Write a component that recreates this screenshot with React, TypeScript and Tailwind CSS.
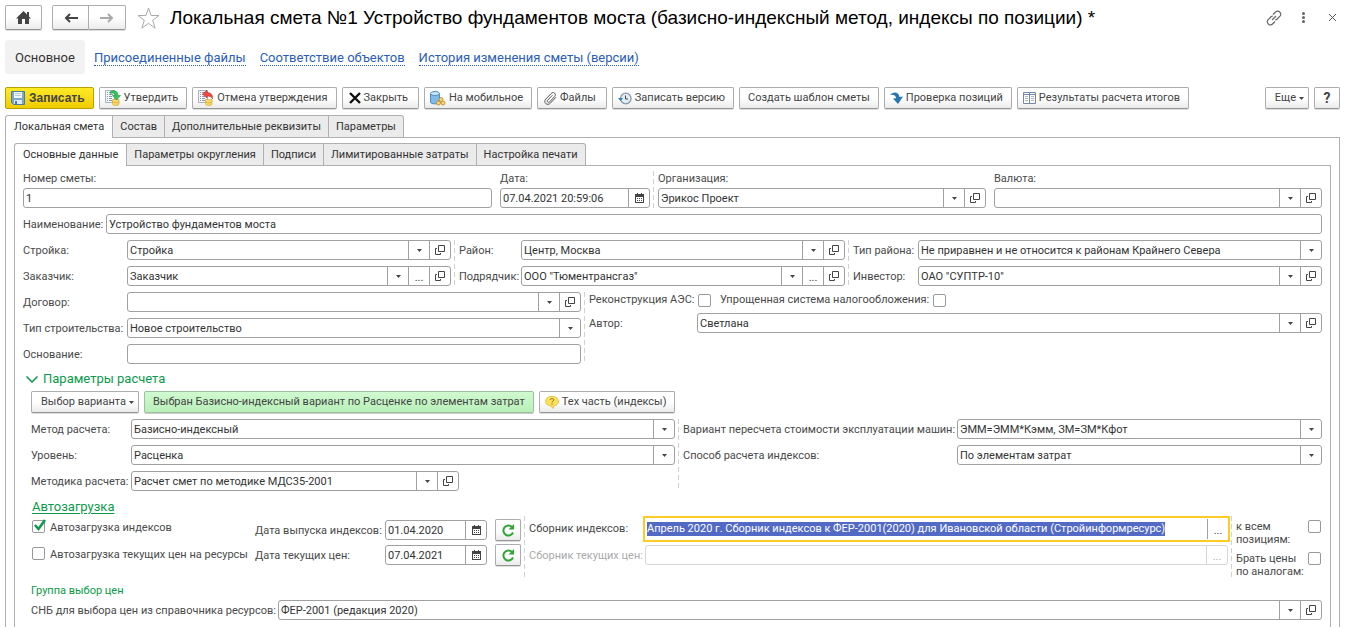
import { useEffect, useRef } from "react";
import type { ReactNode } from "react";

/* ---------- icons ---------- */

const Caret = () => (
  <svg width="5" height="3" viewBox="0 0 5 3" className="shrink-0 fill-[#444]">
    <path d="M0 0h5L2.5 3z" />
  </svg>
);

const OpenIcon = () => (
  <svg width="10" height="10" viewBox="0 0 10 10" fill="none" stroke="#444">
    <path d="M3.500.5h6v6h-6zM2 3.500H.5v6h5V8" />
  </svg>
);

const CalendarIcon = () => (
  <svg width="9" height="10" viewBox="0 0 9 10" fill="#444">
    <path d="M2 0h1v1h3V0h1v1h2v9H0V1h2zM1 4v5h7V4z" fillRule="evenodd" />
    <path d="M2 5h1v1H2zM4 5h1v1H4zM6 5h1v1H6zM2 7h1v1H2zM4 7h1v1H4zM6 7h1v1H6z" />
  </svg>
);

const HomeIcon = () => (
  <svg width="15" height="13" viewBox="0 0 15 13" fill="#444">
    <path d="M7.500 0 11 3.500V1h2v4.500L15 7.500h-2V13H9V8H6v5H2V7.500H0z" />
  </svg>
);

const ArrowIcon = ({ back }: { back?: boolean }) => (
  <svg
    width="14"
    height="10"
    viewBox="0 0 14 10"
    fill="none"
    strokeWidth="2"
    className={back ? "stroke-[#444]" : "stroke-[#aaa]"}
  >
    {back ? <path d="M14 5H2M6 1 2 5l4 4" /> : <path d="M0 5h12M8 1l4 4-4 4" />}
  </svg>
);

const StarIcon = () => (
  <svg width="23" height="22" viewBox="0 0 23 22" fill="none" stroke="#aaa">
    <path d="m11.500 1 2.600 7.500H22l-6.300 4.800 2.400 7.900-6.600-4.900-6.600 4.900 2.400-7.900L1 8.500h7.900z" />
  </svg>
);

const LinkIcon = () => (
  <svg width="16" height="16" viewBox="0 0 16 16" fill="none" stroke="#666" strokeWidth="1.200">
    <path d="M7 4.500 9.500 2a2.800 2.800 0 0 1 4.300.2 2.800 2.800 0 0 1 .2 4L11.200 9a2.800 2.800 0 0 1-2 .8" />
    <path d="M9 11.500 6.500 14a2.800 2.800 0 0 1-4.300-.2 2.800 2.800 0 0 1-.2-4L4.800 7a2.800 2.800 0 0 1 2-.8" />
    <path d="m6 10 4-4" />
  </svg>
);

const DotsIcon = () => (
  <svg width="3" height="11" viewBox="0 0 3 11" fill="#666">
    <circle cx="1.500" cy="1.500" r="1.500" />
    <circle cx="1.500" cy="5.500" r="1.500" />
    <circle cx="1.500" cy="9.500" r="1.500" />
  </svg>
);

const CloseIcon = () => (
  <svg width="7" height="7" viewBox="0 0 7 7" stroke="#555">
    <path d="m0 0 7 7M7 0 0 7" />
  </svg>
);

const SaveIcon = () => (
  <svg width="14" height="14" viewBox="0 0 14 14">
    <path d="M.5.5h13v13h-11l-2-2z" fill="#7ba6cb" stroke="#4a7ba6" />
    <path d="M3 1h8v6H3z" fill="#f2f6fa" />
    <path d="M4 2.500h6M4 4.500h6" stroke="#b9cad9" />
    <path d="M3 9h8v4H3z" fill="#dfe9f1" />
    <path d="M4 10h2v3H4z" fill="#4a7ba6" />
  </svg>
);

const DocIcon = ({ cancel }: { cancel?: boolean }) => (
  <svg width="16" height="16" viewBox="0 0 16 16">
    <path d="M.5.5h9v12h-9z" fill="#f4f7fa" stroke="#a6b2bf" />
    <path d="M2 2.500h1M4 2.500h4M2 4.500h1M4 4.500h4M2 6.500h1M4 6.500h3M2 8.500h1M4 8.500h3M2 10.500h1M4 10.500h3" stroke="#8a9cae" />
    <path d="M7.500 9.500v4.500c0 2 6.500 2 6.500 0V9.500z" fill="#f8d862" stroke="#cfa22b" strokeWidth=".6" />
    <path d="M7.500 11.500c0 1.500 6.500 1.500 6.500 0" fill="none" stroke="#cfa22b" strokeWidth=".6" />
    {cancel ? (
      <path d="M4.500 4 9 .3v2.200c3.500 0 6 2 5.500 6.500-.8-2-2.500-3-5.500-3V8z" fill="#f04a40" stroke="#b82218" strokeWidth=".5" />
    ) : (
      <path d="M5.500 1.500C10-.5 13 1.500 13 5.500h2.500L11.500 10 7.500 5.500H10c0-2-1.500-3-4.500-2z" fill="#35c455" stroke="#178a34" strokeWidth=".5" />
    )}
  </svg>
);

const CrossIcon = () => (
  <svg width="12" height="12" viewBox="0 0 12 12" stroke="#111" strokeWidth="2.400">
    <path d="m1 1 10 10M11 1 1 11" />
  </svg>
);

const DatabaseIcon = () => (
  <svg width="16" height="15" viewBox="0 0 16 15">
    <path d="M.5 2.500v8.500c0 2.500 9 2.500 9 0V2.500z" fill="#7fbaea" stroke="#4a8cc2" />
    <ellipse cx="5" cy="2.500" rx="4.500" ry="2" fill="#cde6f8" stroke="#4a8cc2" />
    <g fill="#fbd475" stroke="#bd8520" strokeWidth=".8">
      <circle cx="11" cy="8.500" r="2" />
      <circle cx="8.500" cy="12" r="2" />
      <circle cx="13" cy="12" r="2" />
    </g>
  </svg>
);

const ClipIcon = () => (
  <svg width="13" height="13" viewBox="0 0 13 13" fill="none" stroke="#555">
    <path d="m12 5.200-5.600 5.900c-1.200 1.300-3.200 1.700-4.600.5s-1.300-3.200-.1-4.500L7.200 1.500c.9-1 2.400-1.200 3.400-.3s1 2.400.1 3.300L5.700 9.800c-.6.600-1.400.7-2 .2s-.5-1.400.1-2L8.400 3.200" />
  </svg>
);

const HistoryIcon = () => (
  <svg width="14" height="13" viewBox="0 0 14 13" fill="none">
    <circle cx="7.800" cy="6.500" r="5.300" fill="#e4edf4" stroke="#8296a6" strokeWidth="1.200" />
    <path d="M7.500 3.500V7H10" stroke="#444" />
    <path d="M0 6h5L2.500 9z" fill="#2d7fb5" />
  </svg>
);

const CheckArrowIcon = () => (
  <svg width="13" height="12" viewBox="0 0 13 12" fill="#2676b5">
    <path d="M0 3C3-1 9-.5 9.500 5L13 4.500 8 12 3 6.500l3-.3C6 3.500 3.500 2 0 3z" />
  </svg>
);

const TableIcon = () => (
  <svg width="13" height="12" viewBox="0 0 13 12" fill="#fff" stroke="#7489a5">
    <path d="M.5.5h6v11h-6zM6.500.5h6v11h-6zM.5 2.500h12" />
    <path d="M2 4.500h3M2 6.500h3M2 8.500h3M8 4.500h3M8 6.500h3M8 8.500h3" stroke="#a9b6c6" />
  </svg>
);

const HintIcon = () => (
  <svg width="14" height="13" viewBox="0 0 14 13">
    <path d="M7 .5c3.800 0 6.500 2 6.500 4.800 0 2.500-2 4.200-4.500 4.600L8 12.500 6 10C2.500 9.700.5 7.800.5 5.300.5 2.500 3.200.5 7 .5z" fill="#fce05a" stroke="#dfbb3a" strokeWidth=".8" />
    <path d="M5.300 4c0-2 3.400-2 3.400 0 0 1.200-1.700 1.200-1.700 2.500M7 7.500v1.200" fill="none" stroke="#7d6c1c" />
  </svg>
);

const RefreshIcon = () => (
  <svg width="13" height="13" viewBox="0 0 13 13" fill="none">
    <path d="M10 3A5 5 0 1 0 11 8.500" stroke="#2fa536" strokeWidth="2" />
    <path d="M12 0v5.500H6.500z" fill="#2fa536" />
  </svg>
);

/* ---------- controls ---------- */

const buttonBase =
  "flex h-[22px] items-center justify-center rounded-[2px] border border-[#adadad] border-b-[#959595] bg-linear-to-b from-white from-50% to-[#ebebeb] whitespace-nowrap shadow-[0_1px_0_#ddd] text-[#444]";

function ToolButton({ icon, children, className = "pr-2 pl-[5px]" }: { icon?: ReactNode; children: ReactNode; className?: string }) {
  return (
    <button type="button" className={`${buttonBase} gap-[3px] ${className}`}>
      {icon}
      {children}
    </button>
  );
}

const cell = "flex w-[21px] shrink-0 items-center justify-center border-l border-[#a0a0a0]";

interface FieldProps {
  id: string;
  value?: string;
  /** cells on the right: v - drop-down, d - dots, o - open, c - calendar */
  cells?: string;
  className?: string;
  disabled?: boolean;
}

function Field({ id, value = "", cells = "", className = "flex-1", disabled }: FieldProps) {
  return (
    <div className={`flex h-5 min-w-0 rounded-[3px] border bg-white text-[#333] ${disabled ? "border-[#d6d6d6]" : "border-[#a0a0a0]"} ${className}`}>
      {cells.includes("v") ? (
        <div className="relative flex min-w-0 flex-1">
          <select id={id} defaultValue={value} className="w-full appearance-none truncate pt-0.5 pl-0.5 outline-none">
            <option>{value}</option>
          </select>
          <span className={`${cell} pointer-events-none absolute inset-y-0 right-0`}>
            <Caret />
          </span>
        </div>
      ) : (
        <input id={id} type="text" defaultValue={value} disabled={disabled} className="w-0 min-w-0 flex-1 pt-0.5 pl-0.5 outline-none" />
      )}
      {cells.includes("c") && (
        <button type="button" aria-label="Календарь" className={cell}>
          <CalendarIcon />
        </button>
      )}
      {cells.includes("d") && (
        <button type="button" disabled={disabled} className={`${cell} pt-1 ${disabled ? "border-[#d6d6d6] text-[#aaa]" : ""}`}>
          ...
        </button>
      )}
      {cells.includes("o") && (
        <button type="button" aria-label="Открыть" className={cell}>
          <OpenIcon />
        </button>
      )}
    </div>
  );
}

interface RowProps extends FieldProps {
  label: string;
  labelClass: string;
}

function Row({ label, labelClass, ...field }: RowProps) {
  return (
    <div className="flex items-center">
      <label htmlFor={field.id} className={`shrink-0 pt-0.5 whitespace-nowrap ${labelClass} ${field.disabled ? "text-[#aaa]" : ""}`}>
        {label}
      </label>
      <Field {...field} />
    </div>
  );
}

function Stacked({ label, ...field }: FieldProps & { label: string }) {
  return (
    <div className="flex min-w-0 flex-col gap-0.5">
      <label htmlFor={field.id} className="pt-px leading-[14px]">
        {label}
      </label>
      <Field {...field} className="" />
    </div>
  );
}

function Checkbox({ id, checked }: { id: string; checked?: boolean }) {
  return (
    <span className="relative flex size-[13px] shrink-0">
      <input
        id={id}
        type="checkbox"
        defaultChecked={checked}
        className="peer size-[13px] appearance-none rounded-[2px] border border-[#999] bg-white"
      />
      <svg
        viewBox="0 0 13 13"
        className="pointer-events-none absolute -top-px left-px hidden size-[13px] fill-none stroke-[#0a9a4a] stroke-[2.500] peer-checked:block"
      >
        <path d="M2 6l3.500 4L12 1" />
      </svg>
    </span>
  );
}

const Divider = () => (
  <div className="mr-1 ml-[3px] w-px shrink-0 bg-[repeating-linear-gradient(to_bottom,#d2d2d2_0_5px,transparent_5px_8px)]" />
);

function Tabs({ items }: { items: string[] }) {
  return (
    <div role="tablist" className="relative -mb-px flex">
      {items.map((item, i) => (
        <button
          key={item}
          role="tab"
          type="button"
          aria-selected={i === 0}
          className={`h-[23px] border-t border-r border-[#b0b0b0] px-[7px] text-[#333] first:rounded-tl-[3px] first:border-l first:px-2 last:rounded-tr-[3px] ${
            i === 0 ? "bg-white" : "border-b bg-[#ebebeb]"
          }`}
        >
          {item}
        </button>
      ))}
    </div>
  );
}

function IndexCollection() {
  const ref = useRef<HTMLInputElement>(null);

  useEffect(() => {
    ref.current?.focus();
    ref.current?.select();
  }, []);

  return (
    <div className="flex h-[22px] min-w-0 flex-1 bg-white py-px ring-2 ring-[#fccb24]">
      <input
        ref={ref}
        id="indexes"
        type="text"
        defaultValue="Апрель 2020 г. Сборник индексов к ФЕР-2001(2020) для Ивановской области (Стройинформресурс)"
        className="w-0 min-w-0 flex-1 pl-0.5 caret-transparent outline-none selection:bg-[#5068c4]/99 selection:text-white"
      />
      <button type="button" className={`${cell} pt-1`}>
        ...
      </button>
    </div>
  );
}

/* ---------- page ---------- */

const links = ["Присоединенные файлы", "Соответствие объектов", "История изменения сметы (версии)"];

export default function App() {
  return (
    <div className="min-w-[1200px] bg-white pt-[5px] pr-2 pl-[5px] font-['Roboto','Liberation_Sans',sans-serif] text-[11px] leading-[14px] text-[#4a4a4a]">
      <header className="flex h-[25px] items-center">
        <button type="button" aria-label="Домой" className={`${buttonBase} h-[25px] w-[37px]`}>
          <HomeIcon />
        </button>
        <div className="ml-2.5 flex">
          <button type="button" aria-label="Назад" className={`${buttonBase} h-[25px] w-[37px] rounded-r-none`}>
            <ArrowIcon back />
          </button>
          <button type="button" aria-label="Вперед" className={`${buttonBase} h-[25px] w-[37px] rounded-l-none border-l-0`}>
            <ArrowIcon />
          </button>
        </div>
        <button type="button" aria-label="В избранное" className="mr-2.5 ml-[11px]">
          <StarIcon />
        </button>
        <h1 className="flex-1 font-['Liberation_Sans',Arial,sans-serif] text-[19px] leading-6 text-black">
          Локальная смета №1 Устройство фундаментов моста (базисно-индексный метод, индексы по позиции) *
        </h1>
        <div className="flex items-center gap-5 pr-1">
          <button type="button" aria-label="Ссылка">
            <LinkIcon />
          </button>
          <button type="button" aria-label="Меню">
            <DotsIcon />
          </button>
          <button type="button" aria-label="Закрыть окно" className="ml-1">
            <CloseIcon />
          </button>
        </div>
      </header>

      <nav className="mt-2.5 flex items-center text-[13px]">
        <a href="#main" className="mr-[9px] rounded-[3px] bg-[#f2f2f2] px-2.5 pt-[11px] pb-[9px] text-[#333]">
          Основное
        </a>
        <div className="flex gap-3.5 pt-0.5">
          {links.map((link) => (
            <a key={link} href="#link" className="border-b border-dotted border-[#2a5db8] text-[#2a5db8]">
              {link}
            </a>
          ))}
        </div>
      </nav>

      <div className="mt-[13px] flex gap-[5px]">
        <button
          type="button"
          className="flex h-[22px] items-center gap-1 rounded-[2px] border border-[#b8a000] bg-linear-to-b from-[#ffe924] to-[#f0cc00] pr-2 pl-[5px] font-['Liberation_Sans',Arial,sans-serif] text-[12px] font-bold text-[#444]"
        >
          <SaveIcon />
          Записать
        </button>
        <ToolButton icon={<DocIcon />}>Утвердить</ToolButton>
        <ToolButton icon={<DocIcon cancel />}>Отмена утверждения</ToolButton>
        <ToolButton icon={<CrossIcon />} className="pr-2.5 pl-1.5">
          Закрыть
        </ToolButton>
        <ToolButton icon={<DatabaseIcon />}>На мобильное</ToolButton>
        <ToolButton icon={<ClipIcon />} className="pr-2.5 pl-1.5">
          Файлы
        </ToolButton>
        <ToolButton icon={<HistoryIcon />}>Записать версию</ToolButton>
        <ToolButton className="px-2">Создать шаблон сметы</ToolButton>
        <ToolButton icon={<CheckArrowIcon />}>Проверка позиций</ToolButton>
        <ToolButton icon={<TableIcon />}>Результаты расчета итогов</ToolButton>
        <ToolButton className="ml-auto pr-1 pl-[9px]">
          Еще <Caret />
        </ToolButton>
        <button type="button" className={`${buttonBase} w-[26px] text-[14px] font-bold`}>
          ?
        </button>
      </div>

      <main className="mt-1.5">
        <Tabs items={["Локальная смета", "Состав", "Дополнительные реквизиты", "Параметры"]} />
        <div className="border border-b-0 border-[#b0b0b0] px-2 pt-[5px]">
          <Tabs items={["Основные данные", "Параметры округления", "Подписи", "Лимитированные затраты", "Настройка печати"]} />
          <div className="flex flex-col gap-1.5 border border-b-0 border-[#b0b0b0] px-2 pt-[5px] pb-[7px]">
            <div className="grid grid-cols-[469fr_158px_336fr_336fr]">
              <Stacked id="number" label="Номер сметы:" value="1" />
              <div className="flex pl-2 *:first:flex-1">
                <Stacked id="date" label="Дата:" value="07.04.2021 20:59:06" cells="c" />
              </div>
              <div className="flex *:last:flex-1">
                <Divider />
                <Stacked id="org" label="Организация:" value="Эрикос Проект" cells="vo" />
              </div>
              <div className="flex pl-2 *:first:flex-1">
                <Stacked id="currency" label="Валюта:" cells="vo" />
              </div>
            </div>

            <Row id="name" label="Наименование:" labelClass="w-[83px]" value="Устройство фундаментов моста" />

            <div className="flex">
              <div className="flex flex-[428] flex-col gap-1.5">
                <Row id="site" label="Стройка:" labelClass="w-[104px]" value="Стройка" cells="vo" />
                <Row id="customer" label="Заказчик:" labelClass="w-[104px]" value="Заказчик" cells="vdo" />
              </div>
              <Divider />
              <div className="flex flex-[386] flex-col gap-1.5">
                <Row id="district" label="Район:" labelClass="w-[62px]" value="Центр, Москва" cells="vo" />
                <Row id="contractor" label="Подрядчик:" labelClass="w-[62px]" value={'ООО "Тюментрансгаз"'} cells="vdo" />
              </div>
              <Divider />
              <div className="flex flex-[469] flex-col gap-1.5">
                <Row id="districtType" label="Тип района:" labelClass="w-[65px]" value="Не приравнен и не относится к районам Крайнего Севера" cells="v" />
                <Row id="investor" label="Инвестор:" labelClass="w-[65px]" value={'ОАО "СУПТР-10"'} cells="vo" />
              </div>
            </div>

            <div className="flex">
              <div className="flex flex-[558] flex-col gap-1.5">
                <Row id="contract" label="Договор:" labelClass="w-[104px]" cells="vo" />
                <Row id="buildType" label="Тип строительства:" labelClass="w-[104px]" value="Новое строительство" cells="v" />
                <Row id="reason" label="Основание:" labelClass="w-[104px]" />
              </div>
              <Divider />
              <div className="flex flex-[733] flex-col gap-1.5">
                <div className="flex items-center pt-px">
                  <label htmlFor="nuclear" className="w-[109px]">
                    Реконструкция АЭС:
                  </label>
                  <Checkbox id="nuclear" />
                  <label htmlFor="tax" className="ml-[9px] w-[213px]">
                    Упрощенная система налогообложения:
                  </label>
                  <Checkbox id="tax" />
                </div>
                <Row id="author" label="Автор:" labelClass="w-[108px]" value="Светлана" cells="vo" />
              </div>
            </div>

            <section className="flex flex-col">
              <h2 className="flex items-center gap-[5px] pl-[3px] text-[13px] leading-[18px] text-[#0a9a4a]">
                <svg width="12" height="7" viewBox="0 0 12 7" fill="none" stroke="currentColor" strokeWidth="1.500">
                  <path d="m.5.5 5.500 5.500L11.500.5" />
                </svg>
                Параметры расчета
              </h2>

              <div className="mt-[3px] flex flex-col gap-1.5 pl-2">
                <div className="flex gap-[5px]">
                  <ToolButton className="pr-1 pl-[9px]">
                    Выбор варианта <Caret />
                  </ToolButton>
                  <button
                    type="button"
                    className="h-[22px] rounded-[2px] border border-[#9fbf9f] bg-linear-to-b from-[#d0fad0] to-[#b9efb9] px-2 text-[#444] shadow-[0_1px_0_#ccc]"
                  >
                    Выбран Базисно-индексный вариант по Расценке по элементам затрат
                  </button>
                  <ToolButton icon={<HintIcon />}>Тех часть (индексы)</ToolButton>
                </div>

                <div className="flex">
                  <div className="flex flex-[644] flex-col gap-1.5">
                    <Row id="method" label="Метод расчета:" labelClass="w-[100px]" value="Базисно-индексный" cells="v" />
                    <Row id="level" label="Уровень:" labelClass="w-[100px]" value="Расценка" cells="v" />
                    <Row id="technique" label="Методика расчета:" labelClass="w-[100px]" value="Расчет смет по методике МДС35-2001" cells="vo" className="w-[328px]" />
                  </div>
                  <Divider />
                  <div className="flex flex-[639] flex-col gap-1.5">
                    <Row id="machines" label="Вариант пересчета стоимости эксплуатации машин:" labelClass="w-[274px]" value="ЭММ=ЭММ*Кэмм, ЗМ=ЗМ*Кфот" cells="v" />
                    <Row id="indexWay" label="Способ расчета индексов:" labelClass="w-[274px]" value="По элементам затрат" cells="v" />
                  </div>
                </div>

                <h3 className="mt-0.5 pl-px text-[13px] leading-[16px] text-[#0a9a4a] underline underline-offset-2">Автозагрузка</h3>

                <div className="-mt-[5px] flex">
                  <div className="flex w-56 flex-col gap-3.5 pt-1 pl-px">
                    <div className="flex h-[13px] items-center gap-[5px]">
                      <Checkbox id="autoIndex" checked />
                      <label htmlFor="autoIndex" className="pt-0.5">
                        Автозагрузка индексов
                      </label>
                    </div>
                    <div className="flex h-[13px] items-center gap-[5px]">
                      <Checkbox id="autoPrice" />
                      <label htmlFor="autoPrice" className="pt-0.5 whitespace-nowrap">
                        Автозагрузка текущих цен на ресурсы
                      </label>
                    </div>
                  </div>
                  <div className="flex flex-col gap-[3px] pt-[3px]">
                    <div className="flex items-center gap-2">
                      <Row id="indexDate" label="Дата выпуска индексов:" labelClass="w-[130px]" value="01.04.2020" cells="c" className="w-[102px]" />
                      <button type="button" aria-label="Обновить индексы" className={`${buttonBase} w-[26px]`}>
                        <RefreshIcon />
                      </button>
                    </div>
                    <div className="flex items-center gap-2">
                      <Row id="priceDate" label="Дата текущих цен:" labelClass="w-[130px]" value="07.04.2021" cells="c" className="w-[102px]" />
                      <button type="button" aria-label="Обновить цены" className={`${buttonBase} w-[26px]`}>
                        <RefreshIcon />
                      </button>
                    </div>
                  </div>
                  <Divider />
                  <div className="flex flex-1 flex-col gap-[5px] pt-0.5">
                    <div className="flex items-center">
                      <label htmlFor="indexes" className="w-[116px] shrink-0">
                        Сборник индексов:
                      </label>
                      <IndexCollection />
                    </div>
                    <Row id="prices" label="Сборник текущих цен:" labelClass="w-[116px]" cells="d" disabled />
                  </div>
                  <Divider />
                  <div className="flex w-[86px] flex-col gap-1.5 pt-1 pr-px leading-[13px]">
                    <div className="flex justify-between">
                      <label htmlFor="toAll">
                        к всем
                        <br />
                        позициям:
                      </label>
                      <Checkbox id="toAll" />
                    </div>
                    <div className="flex justify-between">
                      <label htmlFor="analogs" className="whitespace-nowrap">
                        Брать цены
                        <br />
                        по аналогам:
                      </label>
                      <Checkbox id="analogs" />
                    </div>
                  </div>
                </div>

                <div className="flex flex-col gap-0.5">
                  <h3 className="text-[#0a9a4a]">Группа выбор цен</h3>
                  <Row id="snb" label="СНБ для выбора цен из справочника ресурсов:" labelClass="w-[247px]" value="ФЕР-2001 (редакция 2020)" cells="vo" />
                </div>
              </div>
            </section>
          </div>
        </div>
      </main>
    </div>
  );
}
